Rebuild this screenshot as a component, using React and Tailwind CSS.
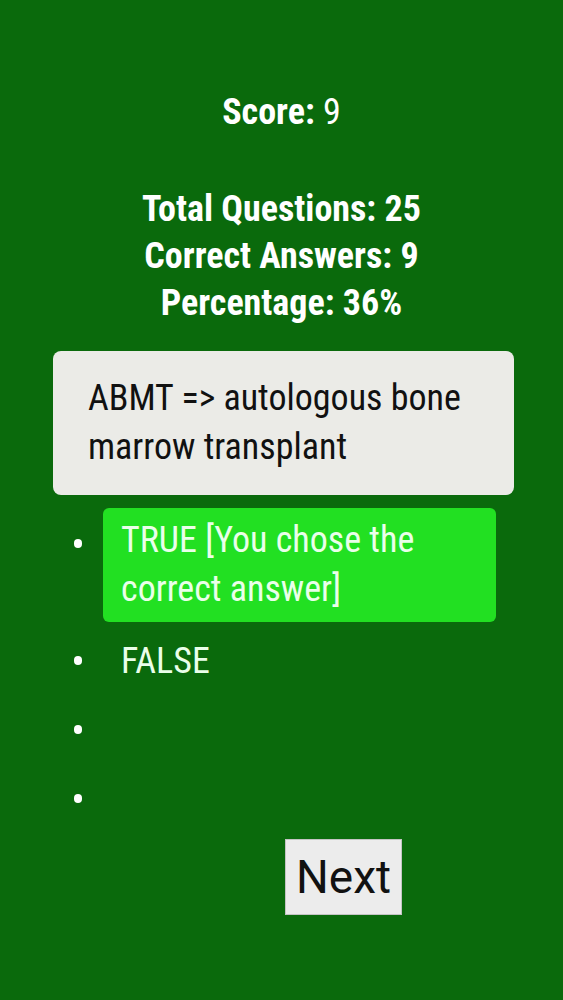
const options = [
  { text: "TRUE [You chose the correct answer]", correct: true },
  { text: "FALSE" },
  { text: "" },
  { text: "" },
];

const App = () => {
  return (
    <div
      className="w-full min-h-[1000px] bg-[#0a6a0c] flex flex-col items-center text-white"
      style={{ fontFamily: '"Roboto Condensed", "Liberation Sans Narrow", Roboto, sans-serif' }}
    >
      <p className="mt-[92px] text-[36px] leading-[40px] font-stretch-condensed">
        <span className="font-bold">Score:</span> 9
      </p>

      <div className="mt-[54px] flex flex-col items-center text-[36px] leading-[47px] font-bold font-stretch-condensed">
        <p>Total Questions: 25</p>
        <p>Correct Answers: 9</p>
        <p>Percentage: 36%</p>
      </div>

      <div className="mt-[24px] w-[461px] ml-[4px] rounded-lg bg-[#ebebe7] px-[35px] pt-[23px] pb-[23px] text-[36px] leading-[49px] text-[#111] font-stretch-condensed">
        ABMT =&gt; autologous bone marrow transplant
      </div>

      <ul className="mt-[13px] w-full pl-[74px] pr-[67px] font-stretch-condensed">
        {options.map((o, i) =>
          o.correct ? (
            <li key={i} className="flex items-start mb-[4px]">
              <span className="mt-[31px] w-[8px] h-[9px] rounded-full bg-white shrink-0" />
              <div className="ml-[21px] flex-1 rounded-md bg-[#22e022] px-[18px] py-[8px] text-[36px] leading-[49px] text-[#eaffea]">
                {o.text}
              </div>
            </li>
          ) : (
            <li key={i} className="flex items-center h-[69px]">
              <span className="w-[8px] h-[9px] rounded-full bg-white shrink-0" />
              <div className="ml-[39px] text-[36px] leading-[50px] text-[#eaffea]">{o.text}</div>
            </li>
          )
        )}
      </ul>

      <div className="w-full flex justify-start pl-[285px] mt-[6px]">
        <button
          className="w-[117px] h-[76px] bg-[#ececec] border border-[#c4c4c4] text-[#111] text-[46px] leading-none flex items-center justify-center"
          style={{ fontFamily: 'Roboto, "Noto Sans", sans-serif' }}
        >
          Next
        </button>
      </div>
    </div>
  );
};

export default App;
